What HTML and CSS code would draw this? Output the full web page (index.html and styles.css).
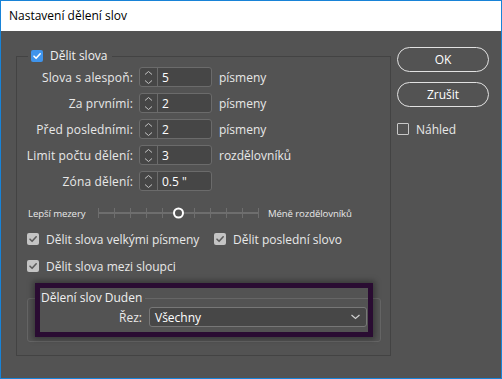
FILE: index.html
```html
<!DOCTYPE html>
<html lang="cs">
<head>
  <meta charset="UTF-8">
  <title>Nastavení dělení slov</title>
  <link rel="stylesheet" href="styles.css">
</head>
<body>
  <div class="window">
    <div class="titlebar">Nastavení dělení slov</div>
    <div class="dialog">
      <fieldset class="main-group">
        <legend><span class="check check-blue"><svg width="12" height="12" viewBox="0 0 12 12"><polyline points="3,6.2 5.1,8.3 9.2,3.8" /></svg></span>Dělit slova</legend>

        <div class="fields">
          <label>Slova s alespoň:</label>
          <div class="spin"><span class="spin-btn"><svg width="17" height="18" viewBox="0 0 17 18"><polyline points="5,6.5 8.5,3.5 12,6.5" /><polyline points="5,12.5 8.5,15.5 12,12.5" /></svg></span><span class="spin-val">5</span></div>
          <span class="unit">písmeny</span>

          <label>Za prvními:</label>
          <div class="spin"><span class="spin-btn"><svg width="17" height="18" viewBox="0 0 17 18"><polyline points="5,6.5 8.5,3.5 12,6.5" /><polyline points="5,12.5 8.5,15.5 12,12.5" /></svg></span><span class="spin-val">2</span></div>
          <span class="unit">písmeny</span>

          <label>Před posledními:</label>
          <div class="spin"><span class="spin-btn"><svg width="17" height="18" viewBox="0 0 17 18"><polyline points="5,6.5 8.5,3.5 12,6.5" /><polyline points="5,12.5 8.5,15.5 12,12.5" /></svg></span><span class="spin-val">2</span></div>
          <span class="unit">písmeny</span>

          <label>Limit počtu dělení:</label>
          <div class="spin"><span class="spin-btn"><svg width="17" height="18" viewBox="0 0 17 18"><polyline points="5,6.5 8.5,3.5 12,6.5" /><polyline points="5,12.5 8.5,15.5 12,12.5" /></svg></span><span class="spin-val">3</span></div>
          <span class="unit">rozdělovníků</span>

          <label>Zóna dělení:</label>
          <div class="spin"><span class="spin-btn"><svg width="17" height="18" viewBox="0 0 17 18"><polyline points="5,6.5 8.5,3.5 12,6.5" /><polyline points="5,12.5 8.5,15.5 12,12.5" /></svg></span><span class="spin-val">0.5 "</span></div>
          <span class="unit"></span>
        </div>

        <div class="slider-row">
          <span class="slider-label">Lepší mezery</span>
          <svg class="track" width="161" height="16" viewBox="0 0 161 16">
            <line x1="0" y1="8" x2="161" y2="8" class="track-line" />
            <path class="ticks" d="M0.5 3V13M16.5 3V13M32.5 3V13M48.5 3V13M64.5 3V13M96.5 3V13M112.5 3V13M128.5 3V13M144.5 3V13M160.5 3V13" />
            <circle cx="80.5" cy="8" r="4.5" class="knob" />
          </svg>
          <span class="slider-label right">Méně rozdělovníků</span>
        </div>

        <div class="check-row">
          <div class="check-item wide"><span class="check check-gray"><svg width="12" height="12" viewBox="0 0 12 12"><polyline points="3,6.2 5.1,8.3 9.2,3.8" /></svg></span>Dělit slova velkými písmeny</div>
          <div class="check-item"><span class="check check-gray"><svg width="12" height="12" viewBox="0 0 12 12"><polyline points="3,6.2 5.1,8.3 9.2,3.8" /></svg></span>Dělit poslední slovo</div>
        </div>
        <div class="check-row">
          <div class="check-item"><span class="check check-gray"><svg width="12" height="12" viewBox="0 0 12 12"><polyline points="3,6.2 5.1,8.3 9.2,3.8" /></svg></span>Dělit slova mezi sloupci</div>
        </div>

        <div class="duden-wrap">
          <fieldset class="duden">
            <legend>Dělení slov Duden</legend>
            <div class="duden-row">
              <label>Řez:</label>
              <div class="select">
                <span>Všechny</span>
                <svg width="9" height="6" viewBox="0 0 9 6"><polyline points="0.5,1 4.5,4.5 8.5,1" /></svg>
              </div>
            </div>
          </fieldset>
          <div class="highlight"></div>
        </div>
      </fieldset>

      <div class="actions">
        <button class="btn">OK</button>
        <button class="btn">Zrušit</button>
        <div class="preview"><span class="check check-empty"></span>Náhled</div>
      </div>
    </div>
  </div>
</body>
</html>
```

FILE: styles.css
```css
body {
  margin: 0;
  background: #fff;
  font-family: "Open Sans", "Noto Sans", sans-serif;
}
.window {
  width: 502px;
  height: 379px;
  box-sizing: border-box;
  border: 1px solid #1883d7;
  background: #535353;
  display: flex;
  flex-direction: column;
}
.titlebar {
  height: 30px;
  line-height: 30px;
  padding-left: 8px;
  background: #fff;
  color: #000;
  font-size: 12px;
}
.dialog {
  display: flex;
  align-items: flex-start;
  padding: 16px 11px 0 15px;
  color: #e8e8e8;
  font-size: 12px;
}
.main-group {
  margin: 0;
  padding: 2px 0 13px;
  width: 375px;
  box-sizing: border-box;
  border: 1px solid #434343;
  min-width: 0;
}
.main-group > legend {
  margin-left: 11px;
  padding: 0 4px 0 3px;
  line-height: 18px;
  display: flex;
  align-items: center;
  gap: 7px;
  color: #f0f0f0;
}
.check {
  width: 12px;
  height: 12px;
  border-radius: 2px;
  box-sizing: border-box;
  display: inline-block;
  flex: none;
}
.check svg {
  display: block;
  fill: none;
  stroke-width: 1.6;
  stroke-linecap: round;
  stroke-linejoin: round;
}
.check-blue {
  background: #3f94ec;
}
.check-blue svg {
  stroke: #fff;
}
.check-gray {
  background: #c4c4c4;
}
.check-gray svg {
  stroke: #5c5c5c;
}
.check-empty {
  border: 1px solid #c8c8c8;
  border-radius: 1px;
}
.fields {
  display: grid;
  grid-template-columns: 116px 73px auto;
  grid-auto-rows: 20px;
  column-gap: 6px;
  row-gap: 6px;
  align-items: center;
}
.fields label {
  text-align: right;
  white-space: nowrap;
  letter-spacing: 0.15px;
}
.unit {
  margin-left: 1px;
}
.spin {
  display: flex;
  align-items: center;
  height: 20px;
  box-sizing: border-box;
  border: 1px solid #6b6b6b;
  border-radius: 3px;
  background: #464646;
}
.spin-btn {
  width: 17px;
  height: 18px;
  border-right: 1px solid #6b6b6b;
}
.spin-btn svg {
  display: block;
  fill: none;
  stroke: #c2c2c2;
  stroke-width: 1;
}
.spin-val {
  padding-left: 4px;
  color: #fff;
}
.slider-row {
  display: flex;
  align-items: center;
  height: 16px;
  margin-top: 14px;
  padding-left: 11px;
  font-size: 9.6px;
  letter-spacing: -0.1px;
}
.slider-label {
  width: 70px;
  white-space: nowrap;
}
.slider-label.right {
  margin-left: 9px;
}
.track {
  display: block;
}
.track-line {
  stroke: #6e6e6e;
  stroke-width: 2;
}
.ticks {
  stroke: #6e6e6e;
  stroke-width: 1;
}
.knob {
  fill: #535353;
  stroke: #fff;
  stroke-width: 2;
}
.check-row {
  display: flex;
  align-items: center;
  height: 18px;
  margin-top: 9px;
  padding-left: 10px;
}
.check-item {
  display: flex;
  align-items: center;
  gap: 7px;
  white-space: nowrap;
}
.check-item.wide {
  width: 187px;
}
.duden-wrap {
  position: relative;
  margin: 15px 0 0 10px;
  width: 354px;
}
.duden {
  margin: 0;
  padding: 1px 0 14px;
  border: 1px solid #666;
  border-radius: 3px;
  min-width: 0;
}
.duden legend {
  margin-left: 10px;
  padding: 0 3px;
  line-height: 16px;
  color: #f0f0f0;
}
.duden-row {
  display: flex;
  align-items: center;
  gap: 7px;
}
.duden-row label {
  width: 114px;
  text-align: right;
}
.select {
  width: 218px;
  height: 20px;
  box-sizing: border-box;
  border: 1px solid #777;
  border-radius: 3px;
  background: #474747;
  display: flex;
  align-items: center;
  justify-content: space-between;
  padding: 0 6px 0 5px;
  color: #fff;
}
.select svg {
  fill: none;
  stroke: #d0d0d0;
  stroke-width: 1.2;
}
.highlight {
  position: absolute;
  left: 8px;
  top: -7px;
  width: 338px;
  height: 54px;
  box-sizing: border-box;
  border: 5px solid #2a0c32;
  box-shadow: 0 0 6px 2px rgba(0, 0, 0, 0.35);
  pointer-events: none;
}
.actions {
  display: flex;
  flex-direction: column;
  width: 92px;
  margin-left: 6px;
}
.btn {
  height: 25px;
  border: 1.5px solid #e2e2e2;
  border-radius: 13px;
  background: transparent;
  color: #fff;
  font-family: inherit;
  font-size: 12px;
  padding: 0;
}
.btn + .btn {
  margin-top: 10px;
}
.preview {
  display: flex;
  align-items: center;
  gap: 7px;
  height: 18px;
  margin-top: 13px;
  white-space: nowrap;
}
```
